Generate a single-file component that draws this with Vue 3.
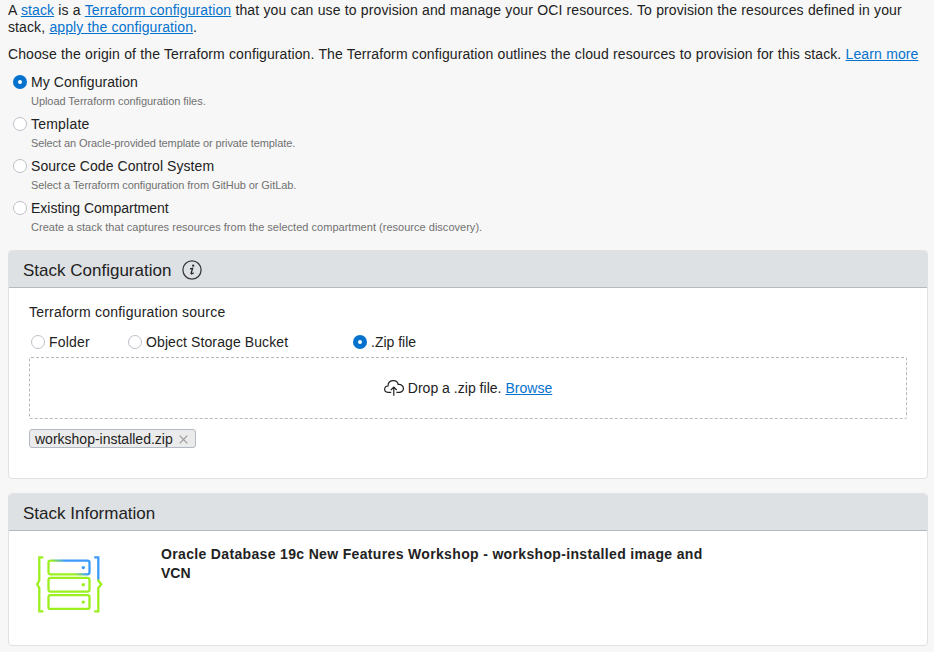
<script setup>
import { ref } from 'vue'

const origin = ref('my')
const source = ref('zip')

const origins = [
  { id: 'my', label: 'My Configuration', hint: 'Upload Terraform configuration files.' },
  { id: 'template', label: 'Template', hint: 'Select an Oracle-provided template or private template.' },
  { id: 'scm', label: 'Source Code Control System', hint: 'Select a Terraform configuration from GitHub or GitLab.' },
  { id: 'compartment', label: 'Existing Compartment', hint: 'Create a stack that captures resources from the selected compartment (resource discovery).' },
]
const sources = [
  { id: 'folder', label: 'Folder' },
  { id: 'bucket', label: 'Object Storage Bucket' },
  { id: 'zip', label: '.Zip file' },
]
</script>

<template>
  <main class="page">
    <p class="intro">
      A <a href="#">stack</a> is a <a href="#">Terraform configuration</a> that you can use to provision and manage your OCI resources. To provision the resources defined in your<br>
      stack, <a href="#">apply the configuration</a>.
    </p>
    <p class="intro choose">Choose the origin of the Terraform configuration. The Terraform configuration outlines the cloud resources to provision for this stack. <a href="#">Learn more</a></p>

    <div class="origins">
      <div v-for="o in origins" :key="o.id" class="origin" @click="origin = o.id">
        <div class="choice"><i class="radio" :class="{ on: origin === o.id }"></i><span :class="'label-' + o.id">{{ o.label }}</span></div>
        <div class="hint"><span :class="'hint-' + o.id">{{ o.hint }}</span></div>
      </div>
    </div>

    <section class="panel config">
      <header class="head">
        <h2>Stack Configuration</h2>
        <svg class="info" width="20" height="20" viewBox="0 0 20 20">
          <circle cx="10" cy="10" r="9.1" fill="none" stroke="#3a3a3a" stroke-width="1.3" />
          <circle cx="11.2" cy="5.7" r="1.1" fill="#222" />
          <path d="M8 8.9 L10.6 8.4 L9.1 13.3 Q9 14.7 11.7 12.8" fill="none" stroke="#222" stroke-width="1.3" />
        </svg>
      </header>
      <div class="body">
        <div class="field-title">Terraform configuration source</div>
        <div class="sources">
          <div v-for="s in sources" :key="s.id" class="choice" :class="'src-' + s.id" @click="source = s.id">
            <i class="radio" :class="{ on: source === s.id }"></i><span>{{ s.label }}</span>
          </div>
        </div>
        <div class="drop">
          <svg width="20" height="17" viewBox="0 0 20 17" fill="none" stroke="#222" stroke-width="1.2">
            <path d="M7.2 12.4 H4 C-0.6 12.2 -0.3 6.2 4 6 C4 -0.6 13 -1 14.2 4.5 C20.8 3.8 21 12.2 15.6 12.4 H12.4" />
            <path d="M9.8 15.8 V7.2 M6.9 10 L9.8 7 L12.7 10" />
          </svg>
          <span class="drop-text">Drop a .zip file. <a href="#">Browse</a></span>
        </div>
        <div class="chip">
          <span>workshop-installed.zip</span>
          <svg width="9" height="9" viewBox="0 0 9 9"><path d="M0.7 0.7 L8.3 8.3 M8.3 0.7 L0.7 8.3" stroke="#97999c" stroke-width="1.2" /></svg>
        </div>
      </div>
    </section>

    <section class="panel information">
      <header class="head"><h2>Stack Information</h2></header>
      <div class="info-body">
        <svg class="stack-icon" width="68" height="58" viewBox="0 0 68 58" fill="none" stroke-width="2.3">
          <defs>
            <linearGradient id="mix" gradientUnits="userSpaceOnUse" x1="31.8" y1="14.4" x2="35.2" y2="8.6">
              <stop offset="0" stop-color="#9bf01e" /><stop offset="1" stop-color="#3d9bfa" />
            </linearGradient>
          </defs>
          <g stroke="#9bf01e">
            <path d="M7.4 1.3 H3.3 V24.5 L1.2 28.2 L3.3 32 V55.3 H7.4" />
            <path d="M62.3 23 V24.5 L65.2 28.2 L62.3 32 V55.3 H58.2" />
            <rect x="12.5" y="21.9" width="41" height="13.7" rx="2" />
            <rect x="12.5" y="39.2" width="41" height="13.7" rx="2" />
          </g>
          <rect x="12.5" y="4.6" width="41" height="13.7" rx="2" stroke="url(#mix)" />
          <path d="M58.2 1.3 H62.3 V23.5" stroke="#3d9bfa" />
          <circle cx="47.3" cy="11.6" r="1.7" fill="#3d9bfa" />
          <circle cx="47.3" cy="28.8" r="1.7" fill="#9bf01e" />
          <circle cx="47.3" cy="46.1" r="1.7" fill="#9bf01e" />
        </svg>
        <div class="title"><span class="wide">Oracle Database 19c New Features Workshop - workshop-installed image and</span><br>VCN</div>
      </div>
    </section>
  </main>
</template>

<style>
body { background: #f7f7f7; overflow: hidden; }
</style>

<style scoped>
* { box-sizing: border-box; }
.page { width: 934px; height: 652px; padding: 2px 6px 0 8px; overflow: hidden; background: #f7f7f7; color: #222; font: 14px/17px "Liberation Sans", Arial, sans-serif; white-space: nowrap; }
a { color: #0572ce; text-decoration: underline; }
.intro { margin: 0; letter-spacing: 0.1px; word-spacing: 0.24px; }
.choose { margin-top: 10px; }
.origins { padding: 9px 0 0 5px; }
.origin { height: 42px; }
.choice { display: flex; align-items: center; height: 20px; gap: 4px; }
.label-my, .label-scm { letter-spacing: 0.07px; }
.label-template { letter-spacing: 0.22px; }
.radio { width: 14px; height: 14px; flex: none; border: 1px solid #bdc1c9; border-radius: 50%; background: #fff; }
.radio.on { border: 5px solid #0572ce; }
.hint { padding-left: 18px; font-size: 11px; line-height: 18px; color: #717171; }
.hint-my { letter-spacing: -0.05px; }
.hint-template { letter-spacing: -0.1px; }
.hint-scm { letter-spacing: -0.075px; }
.hint-compartment { letter-spacing: 0.02px; }
.panel { width: 920px; border: 1px solid #e0e1e2; border-radius: 4px; background: #fff; overflow: hidden; }
.config { height: 229px; margin-top: 10px; }
.information { height: 153px; margin-top: 14px; }
.head { display: flex; align-items: center; height: 37px; padding: 0 14px; gap: 11px; background: #dee1e4; border-bottom: 1px solid #b5bac0; }
h2 { margin: 0; padding-top: 3px; font-size: 17px; line-height: 20px; font-weight: 400; }
.info { margin-top: 2px; }
.body { padding: 15px 20px 0; }
.field-title { height: 18px; line-height: 18px; letter-spacing: 0.22px; }
.sources { display: flex; padding: 11px 0 0 2px; height: 36px; }
.src-folder { width: 97px; letter-spacing: 0.2px; }
.src-bucket { width: 225px; letter-spacing: 0.1px; }
.drop { display: flex; align-items: center; justify-content: center; height: 62px; border: 1px dashed #b3b9c1; border-radius: 2px; gap: 4px; }
.drop-text { letter-spacing: 0.02px; }
.chip { display: flex; align-items: center; width: 167px; height: 19px; margin-top: 10px; padding: 2px 7px 0 5px; justify-content: space-between; border: 1px solid #b4bac4; border-radius: 3px; background: #ebebeb; }
.info-body { display: flex; padding: 14px 0 0 27px; }
.stack-icon { margin-top: 11px; }
.title { margin-left: 57px; line-height: 19px; font-weight: 700; }
.wide { letter-spacing: 0.34px; }
</style>
